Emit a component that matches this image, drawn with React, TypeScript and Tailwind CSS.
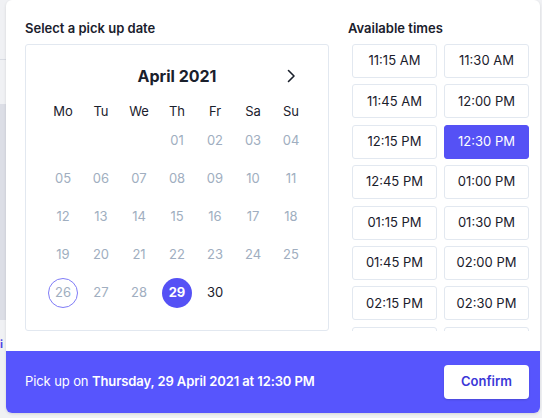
import React from "react";

const times = [
  "11:15 AM", "11:30 AM", "11:45 AM", "12:00 PM", "12:15 PM", "12:30 PM",
  "12:45 PM", "01:00 PM", "01:15 PM", "01:30 PM", "01:45 PM", "02:00 PM",
  "02:15 PM", "02:30 PM",
];

const weekdays = ["Mo", "Tu", "We", "Th", "Fr", "Sa", "Su"];

export default function App() {
  const days: (number | null)[] = [null, null, null];
  for (let i = 1; i <= 30; i++) days.push(i);

  return (
    <div
      className="relative w-[542px] h-[418px] overflow-hidden bg-[#f0f1f4]"
      style={{ fontFamily: "Inter, 'Noto Sans', sans-serif" }}
    >
      {/* background page hints */}
      <div className="absolute left-0 top-[59px] w-[6px] h-px bg-[#d9dce3]" />
      <div className="absolute left-0 top-[104px] w-[6px] h-[216px] bg-[#dcdee6]" />
      <div className="absolute left-0 top-[338px] w-[3px] h-[12px] text-[11px] leading-[12px] text-[#4f46e5] font-bold">i</div>

      {/* modal */}
      <div className="absolute left-[6px] top-0 w-[534px] h-[413px] bg-white rounded-md shadow-[0_1px_3px_rgba(0,0,0,0.12)] flex flex-col overflow-hidden">
        <div className="flex pl-[19px] pt-[20px] pb-[20px] gap-[19px]">
          {/* calendar column */}
          <div className="w-[304px] flex flex-col">
            <div className="text-[13px] leading-4 font-semibold text-[#1a202c] mb-[8px]">Select a pick up date</div>
            <div className="h-[287px] border border-[#e2e8f0] rounded-[3px] px-[18px] pt-[19px]">
              <div className="grid grid-cols-7 h-[24px] items-center">
                <div className="col-start-3 col-span-3 text-center text-[16px] font-bold text-[#1a202c] leading-6">April 2021</div>
                <div className="col-start-7 flex justify-center">
                  <svg width="9" height="14" viewBox="0 0 9 14" fill="none">
                    <polyline points="1.5,1.5 7,7 1.5,12.5" stroke="#1a202c" strokeWidth="1.6" strokeLinecap="round" strokeLinejoin="round" />
                  </svg>
                </div>
              </div>
              <div className="grid grid-cols-7 mt-[14px] h-[20px] items-center">
                {weekdays.map((w) => (
                  <div key={w} className="text-center text-[13px] text-[#1a202c]">{w}</div>
                ))}
              </div>
              <div className="grid grid-cols-7">
                {days.map((d, i) => (
                  <div key={i} className="h-[38px] flex items-center justify-center">
                    {d === null ? null : d === 29 ? (
                      <div className="w-[30px] h-[30px] rounded-full bg-[#5551f5] text-white font-bold text-[13px] flex items-center justify-center">29</div>
                    ) : d === 26 ? (
                      <div className="w-[30px] h-[30px] rounded-full border border-[#7f7cf7] text-[#a0aec0] text-[13px] flex items-center justify-center">26</div>
                    ) : (
                      <span className={`text-[13px] ${d === 30 ? "text-[#1a202c]" : "text-[#a0aec0]"}`}>
                        {String(d).padStart(2, "0")}
                      </span>
                    )}
                  </div>
                ))}
              </div>
            </div>
          </div>

          {/* times column */}
          <div className="w-[185px] flex flex-col">
            <div className="text-[13px] leading-4 font-semibold text-[#1a202c] mb-[8px]">Available times</div>
            <div className="h-[287px] overflow-hidden px-[4px]">
              <div className="grid grid-cols-[85px_85px] gap-x-[7px] gap-y-[6.4px]">
                {times.map((t) => (
                  <div
                    key={t}
                    className={`h-[34px] rounded-[3px] border flex items-center justify-center text-[13px] ${
                      t === "12:30 PM"
                        ? "bg-[#5551f5] border-[#5551f5] text-white"
                        : "bg-white border-[#e2e8f0] text-[#1a202c]"
                    }`}
                  >
                    {t}
                  </div>
                ))}
                <div className="h-[34px] rounded-[3px] border border-[#e2e8f0] bg-white" />
                <div className="h-[34px] rounded-[3px] border border-[#e2e8f0] bg-white" />
              </div>
            </div>
          </div>
        </div>

        {/* footer */}
        <div className="flex-1 bg-[#5755fd] flex items-center justify-between pl-[19px] pr-[11px]">
          <div className="text-[13px] text-white tracking-[-0.1px]">
            Pick up on <span className="font-semibold">Thursday, 29 April 2021 at 12:30 PM</span>
          </div>
          <button className="w-[85px] h-[34px] bg-white rounded-[4px] text-[13px] font-semibold text-[#3b37d8] shadow-[0_1px_2px_rgba(0,0,0,0.15)]">
            Confirm
          </button>
        </div>
      </div>
    </div>
  );
}
